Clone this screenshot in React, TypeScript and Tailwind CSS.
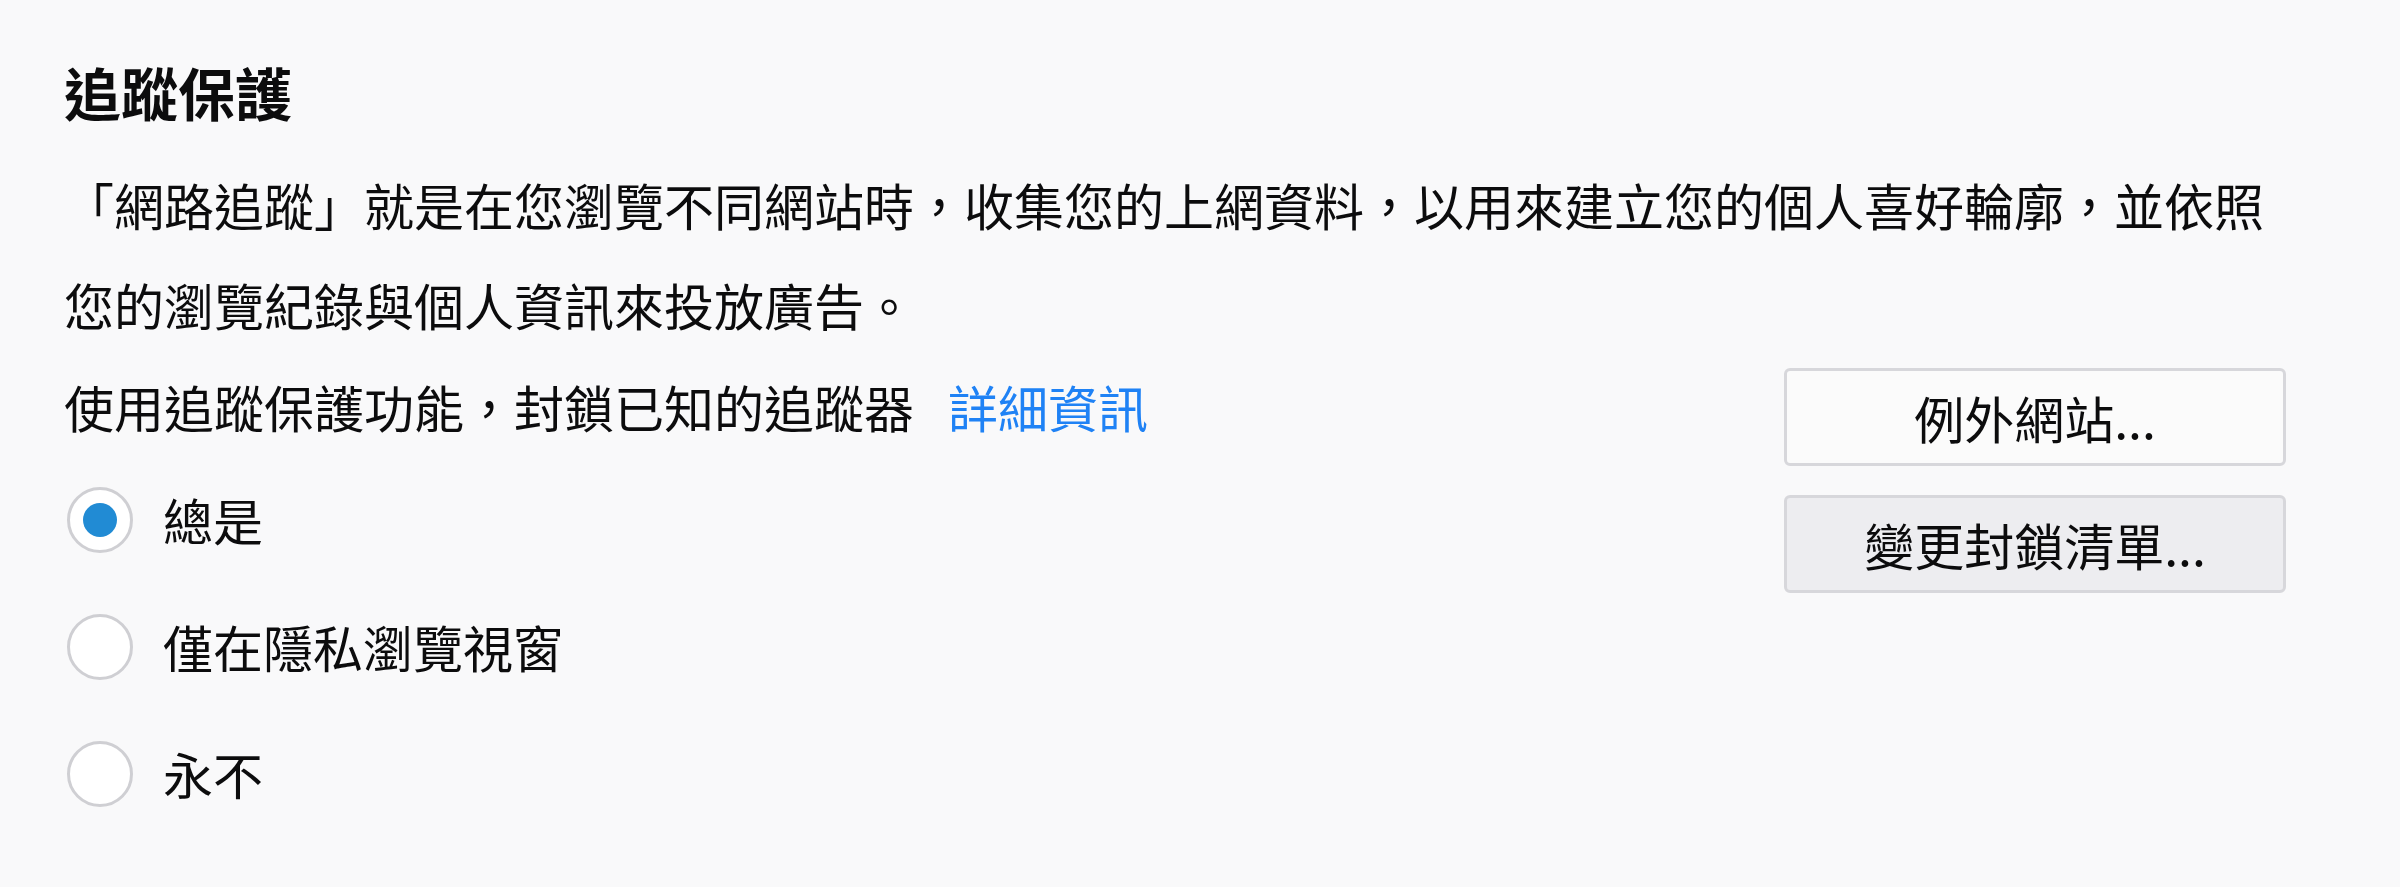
import React, { useState } from 'react';

const font = { fontFamily: '"Noto Sans CJK TC", "Noto Sans", sans-serif' };

type Mode = 'always' | 'private' | 'never';

const options: { value: Mode; label: string }[] = [
  { value: 'always', label: '總是' },
  { value: 'private', label: '僅在隱私瀏覽視窗' },
  { value: 'never', label: '永不' },
];

const Radio: React.FC<{ checked: boolean; label: string; onSelect: () => void }> = ({ checked, label, onSelect }) => (
  <label className="flex h-[127px] items-center cursor-pointer" onClick={onSelect}>
    <span className="ml-[3px] flex h-[66px] w-[66px] shrink-0 items-center justify-center rounded-full border-[3px] border-[#cfcfd3] bg-white">
      {checked && <span className="h-[34px] w-[34px] rounded-full bg-[#218bd4]" />}
    </span>
    <span className="ml-[30px]">{label}</span>
  </label>
);

export default function App() {
  const [mode, setMode] = useState<Mode>('always');

  return (
    <div
      className="min-h-screen w-full bg-[#f9f9fa] pl-[64px] pr-[114px] pt-[51px] text-[50px] text-[#0c0c0d]"
      style={font}
    >
      <h2 className="text-[57px] font-bold leading-[80px]">追蹤保護</h2>
      <p className="mt-[23px] leading-[100px]">
        「網路追蹤」就是在您瀏覽不同網站時，收集您的上網資料，以用來建立您的個人喜好輪廓，並依照您的瀏覽紀錄與個人資訊來投放廣告。
      </p>

      <div className="mt-[2px] flex justify-between">
        <div>
          <div className="leading-[100px]">
            <span>使用追蹤保護功能，封鎖已知的追蹤器</span>
            <a href="#" className="ml-[34px] text-[#1f82f5]">詳細資訊</a>
          </div>
          <div className="flex flex-col">
            {options.map((o) => (
              <Radio
                key={o.value}
                label={o.label}
                checked={mode === o.value}
                onSelect={() => setMode(o.value)}
              />
            ))}
          </div>
        </div>

        <div className="mt-[12px] flex w-[502px] flex-col gap-[29px]">
          <button className="h-[98px] w-full rounded-[6px] border-[3px] border-[#d7d7db] bg-[#fbfbfb] leading-none">
            例外網站...
          </button>
          <button className="h-[98px] w-full rounded-[6px] border-[3px] border-[#d7d7db] bg-[#ededf0] leading-none">
            變更封鎖清單...
          </button>
        </div>
      </div>
    </div>
  );
}
